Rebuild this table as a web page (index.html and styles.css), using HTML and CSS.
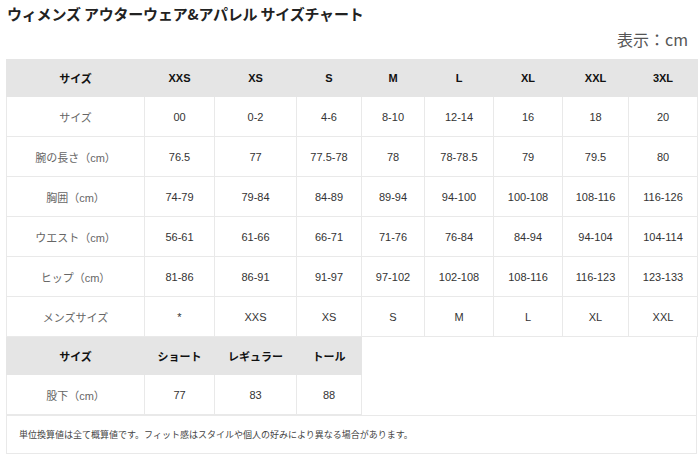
FILE: index.html
```html
<!DOCTYPE html>
<html lang="ja">
<head>
<meta charset="utf-8">
<link rel="stylesheet" href="styles.css">
</head>
<body>
<h1 class="title">ウィメンズ アウターウェア&amp;アパレル サイズチャート</h1>
<div class="unit">表示：cm</div>
<div class="chart">
  <table class="t1">
    <colgroup>
      <col style="width:138px"><col style="width:70px"><col style="width:82px"><col style="width:65px"><col style="width:63px"><col style="width:69px"><col style="width:69px"><col style="width:66px"><col style="width:69px">
    </colgroup>
    <thead>
      <tr><th>サイズ</th><th>XXS</th><th>XS</th><th>S</th><th>M</th><th>L</th><th>XL</th><th>XXL</th><th>3XL</th></tr>
    </thead>
    <tbody>
      <tr><td class="lbl">サイズ</td><td>00</td><td>0-2</td><td>4-6</td><td>8-10</td><td>12-14</td><td>16</td><td>18</td><td>20</td></tr>
      <tr><td class="lbl">腕の長さ（cm）</td><td>76.5</td><td>77</td><td>77.5-78</td><td>78</td><td>78-78.5</td><td>79</td><td>79.5</td><td>80</td></tr>
      <tr><td class="lbl">胸囲（cm）</td><td>74-79</td><td>79-84</td><td>84-89</td><td>89-94</td><td>94-100</td><td>100-108</td><td>108-116</td><td>116-126</td></tr>
      <tr><td class="lbl">ウエスト（cm）</td><td>56-61</td><td>61-66</td><td>66-71</td><td>71-76</td><td>76-84</td><td>84-94</td><td>94-104</td><td>104-114</td></tr>
      <tr><td class="lbl">ヒップ（cm）</td><td>81-86</td><td>86-91</td><td>91-97</td><td>97-102</td><td>102-108</td><td>108-116</td><td>116-123</td><td>123-133</td></tr>
      <tr><td class="lbl">メンズサイズ</td><td>*</td><td>XXS</td><td>XS</td><td>S</td><td>M</td><td>L</td><td>XL</td><td>XXL</td></tr>
    </tbody>
  </table>
  <div class="lower">
    <table class="t2">
      <colgroup>
        <col style="width:138px"><col style="width:70px"><col style="width:82px"><col style="width:65px">
      </colgroup>
      <thead>
        <tr><th>サイズ</th><th>ショート</th><th>レギュラー</th><th>トール</th></tr>
      </thead>
      <tbody>
        <tr><td class="lbl">股下（cm）</td><td>77</td><td>83</td><td>88</td></tr>
      </tbody>
    </table>
    <div class="filler"></div>
  </div>
  <div class="note">単位換算値は全て概算値です。フィット感はスタイルや個人の好みにより異なる場合があります。</div>
</div>
</body>
</html>
```

FILE: styles.css
```css
html, body {
  margin: 0;
  padding: 0;
  background: #fff;
}
body {
  font-family: "Liberation Sans", "Noto Sans CJK JP", sans-serif;
  color: #333;
}
.title {
  margin: 0;
  padding: 4px 0 0 7px;
  font-size: 15px;
  line-height: 20px;
  font-weight: bold;
  color: #222;
  font-family: "Noto Sans CJK JP", sans-serif;
  letter-spacing: -0.2px;
}
.unit {
  margin-top: 5px;
  padding-right: 12px;
  text-align: right;
  font-size: 16px;
  line-height: 20px;
  color: #555;
  font-family: "Noto Sans CJK JP", sans-serif;
}
.chart {
  width: 691px;
  margin: 10px 0 0 6px;
}
table {
  border-collapse: collapse;
  table-layout: fixed;
}
.t1 {
  width: 691px;
}
.t2 {
  width: 355px;
}
th, td {
  padding: 0;
  text-align: center;
  font-size: 11px;
}
th {
  background: #e5e5e5;
  border: 1px solid #e5e5e5;
  height: 36px;
  font-weight: bold;
  color: #111;
}
td {
  border: 1px solid #e9e9e9;
  height: 39px;
  color: #333;
}
td.lbl {
  color: #666;
}
.lower {
  display: flex;
}
.filler {
  flex: 1;
  border-right: 1px solid #e9e9e9;
}
.note {
  height: 37px;
  display: flex;
  align-items: center;
  padding-left: 12px;
  border: 1px solid #e9e9e9;
  border-top: 1px solid #e9e9e9;
  font-size: 9px;
  color: #444;
}
```
